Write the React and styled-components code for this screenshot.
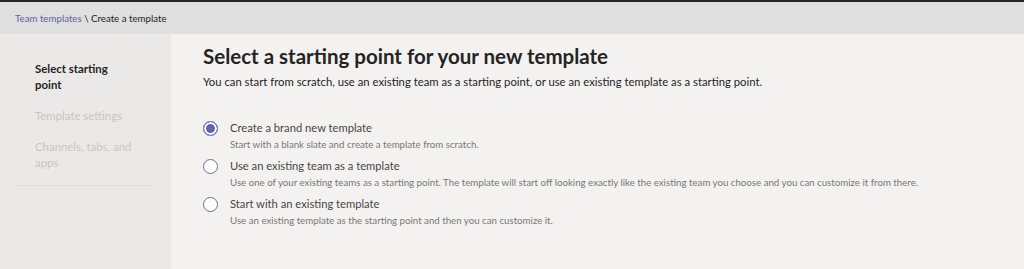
import React from "react";
import styled, { createGlobalStyle } from "styled-components";

const Global = createGlobalStyle`
  html, body { margin: 0; padding: 0; }
  body { font-family: "Lato", "Noto Sans", sans-serif; background: #f3f2f1; }
  #root { height: 269px; }
`;

const Page = styled.div`
  display: flex;
  flex-direction: column;
  height: 269px;
  border-top: 2px solid #252423;
  box-sizing: border-box;
  overflow: hidden;
`;

const Header = styled.div`
  height: 32px;
  background: #dfdfdf;
  display: flex;
  align-items: center;
  padding-left: 15px;
  font-size: 9.7px;
  color: #252423;
  flex-shrink: 0;
`;

const Crumb = styled.span`
  color: ${(p) => (p.$link ? "#5b5fa0" : "#252423")};
`;

const Body = styled.div`
  flex: 1;
  display: flex;
`;

const Sidebar = styled.nav`
  width: 171px;
  background: #eae9e7;
  padding: 27px 16px 0 14px;
  box-sizing: border-box;
  flex-shrink: 0;
`;

const NavList = styled.div`
  padding: 0 0 14px 21px;
  border-bottom: 1px solid #e1dfdd;
  display: flex;
  flex-direction: column;
  gap: 15px;
`;

const NavItem = styled.div`
  font-size: 11.4px;
  line-height: 16px;
  width: 100px;
  color: ${(p) => (p.$active ? "#252423" : "#c8c6c4")};
  font-weight: ${(p) => (p.$active ? 700 : 400)};
`;

const Main = styled.main`
  flex: 1;
  background: #f3f2f1;
  padding: 8px 0 0 32px;
`;

const Title = styled.h1`
  margin: 0;
  font-size: 20.5px;
  line-height: 28px;
  font-weight: 700;
  color: #252423;
`;

const Subtitle = styled.p`
  margin: 4px 0 0;
  font-size: 11.3px;
  line-height: 16px;
  color: #252423;
`;

const Options = styled.div`
  margin-top: 30px;
  display: flex;
  flex-direction: column;
  gap: 6px;
`;

const Option = styled.label`
  display: grid;
  grid-template-columns: 27px 1fr;
  align-items: center;
  cursor: pointer;
`;

const Radio = styled.span`
  width: 15px;
  height: 15px;
  border-radius: 50%;
  box-sizing: border-box;
  border: 1px solid ${(p) => (p.$checked ? "#6264a7" : "#6e6d8c")};
  background: ${(p) => (p.$checked ? "#6264a7" : "#fff")};
  box-shadow: ${(p) => (p.$checked ? "inset 0 0 0 2px #fff" : "none")};
  position: relative;
  ${(p) =>
    p.$checked &&
    `&::after{content:"";position:absolute;inset:-1px;border-radius:50%;border:1px solid #8b8cc7;}`}
`;

const OptionLabel = styled.span`
  font-size: 11.2px;
  line-height: 16px;
  color: #484644;
`;

const OptionDesc = styled.span`
  grid-column: 2;
  font-size: 9.7px;
  line-height: 16px;
  color: #797775;
`;

const options = [
  {
    label: "Create a brand new template",
    desc: "Start with a blank slate and create a template from scratch.",
    checked: true,
  },
  {
    label: "Use an existing team as a template",
    desc: "Use one of your existing teams as a starting point. The template will start off looking exactly like the existing team you choose and you can customize it from there.",
  },
  {
    label: "Start with an existing template",
    desc: "Use an existing template as the starting point and then you can customize it.",
  },
];

export default function App() {
  return (
    <>
      <Global />
      <Page>
        <Header>
          <Crumb $link>Team templates</Crumb>
          <Crumb>&nbsp;\ Create a template</Crumb>
        </Header>
        <Body>
          <Sidebar>
            <NavList>
              <NavItem $active>Select starting point</NavItem>
              <NavItem>Template settings</NavItem>
              <NavItem>Channels, tabs, and apps</NavItem>
            </NavList>
          </Sidebar>
          <Main>
            <Title>Select a starting point for your new template</Title>
            <Subtitle>
              You can start from scratch, use an existing team as a starting point, or use an existing template as a starting point.
            </Subtitle>
            <Options>
              {options.map((o) => (
                <Option key={o.label}>
                  <Radio $checked={o.checked} />
                  <OptionLabel>{o.label}</OptionLabel>
                  <OptionDesc>{o.desc}</OptionDesc>
                </Option>
              ))}
            </Options>
          </Main>
        </Body>
      </Page>
    </>
  );
}
